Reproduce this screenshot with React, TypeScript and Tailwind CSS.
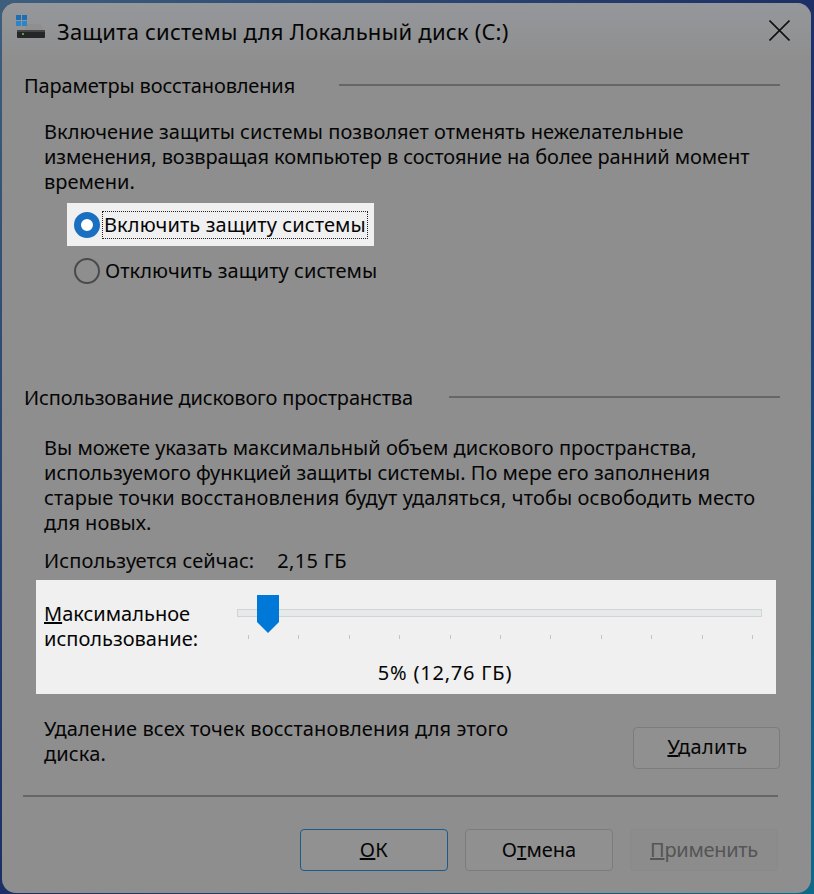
function DriveIcon() {
  return (
    <svg width="30" height="26" viewBox="0 0 30 26" className="block">
      <path d="M9 15 V9 H24 L28 15 Z" fill="#8f8f8f" />
      <rect x="1" y="15" width="28" height="8" rx="1" fill="#262626" />
      <rect x="1" y="15" width="28" height="2" fill="#454545" />
      <rect x="6" y="18" width="2" height="2" fill="#3fae4a" />
      <rect x="0" y="0" width="5" height="5" fill="#1f6fb0" />
      <rect x="6" y="0" width="5" height="5" fill="#1f6fb0" />
      <rect x="0" y="6" width="5" height="5" fill="#2b86c9" />
      <rect x="6" y="6" width="5" height="5" fill="#2b86c9" />
    </svg>
  );
}

function SectionTitle({ text, gap }: { text: string; gap: string }) {
  return (
    <div className="flex items-center pl-[22px] pr-[31px] h-[28px]">
      <span className="whitespace-nowrap tracking-[-0.15px]">{text}</span>
      <div className={'flex-1 h-[2px] bg-[#666666] ' + gap} />
    </div>
  );
}

function DlgButton({ children, className }: { children: React.ReactNode; className: string }) {
  return (
    <button className={'h-[42px] rounded-[4px] border flex items-center justify-center ' + className}>
      {children}
    </button>
  );
}

const ticks = [0, 1, 2, 3, 4, 5, 6, 7, 8, 9, 10];

export default function App() {
  return (
    <div className="w-[814px] h-[894px] bg-gradient-to-br from-[#3d5f7c] via-[#1c2f66] to-[#0e6a8a] p-[2px] overflow-hidden">
      <div className="w-[809px] h-[890px] mt-px rounded-[14px] bg-[#8e8e8e] text-[#050505] text-[20px] leading-[25px] font-['Noto_Sans','DejaVu_Sans',sans-serif] overflow-hidden">
        {/* title bar */}
        <div className="flex items-start h-[61px] pl-[14px] pr-[21px] pt-[12px] bg-gradient-to-b from-[#95979b] to-[#8e8e8e]">
          <DriveIcon />
          <span className="ml-[11px] mt-[1px] leading-[30px] text-[22px] tracking-[0.22px]">
            Защита системы для Локальный диск (C:)
          </span>
          <svg width="21" height="21" viewBox="0 0 21 21" className="ml-auto mt-[5px]">
            <path d="M0.5 0.5 L20.5 20.5 M20.5 0.5 L0.5 20.5" stroke="#111111" strokeWidth="1.6" />
          </svg>
        </div>

        <div className="mt-[7px]">
          <SectionTitle text="Параметры восстановления" gap="ml-[44px]" />
        </div>

        <p className="ml-[42px] mt-[20px] w-[730px]">
          <span className="tracking-[0.02px]">Включение защиты системы позволяет отменять нежелательные</span>
          <br />
          <span className="tracking-[-0.09px]">изменения, возвращая компьютер в состояние на более ранний момент</span>
          <br />
          времени.
        </p>

        <div className="ml-[65px] mt-[9px] w-[307px] h-[43px] bg-[#f0f0f0] flex items-center pl-[7px]">
          <span className="w-[26px] h-[26px] rounded-full border-[7px] border-[#1a6fc0] bg-white shrink-0" />
          <span className="ml-[3px] outline-1 outline-dotted outline-[#222222] leading-[26px] px-px whitespace-nowrap tracking-[0.1px]">
            Включить защиту системы
          </span>
        </div>

        <div className="ml-[72px] mt-[3px] h-[43px] flex items-center">
          <span className="w-[26px] h-[26px] rounded-full border-2 border-[#4a4a4a] shrink-0" />
          <span className="ml-[5px] whitespace-nowrap tracking-[0.05px]">Отключить защиту системы</span>
        </div>

        <div className="mt-[91px]">
          <SectionTitle text="Использование дискового пространства" gap="ml-[36px]" />
        </div>

        <p className="ml-[42px] mt-[24px] w-[730px]">
          Вы можете указать максимальный объем дискового пространства,
          <br />
          используемого функцией защиты системы. По мере его заполнения
          <br />
          <span className="tracking-[0.12px]">старые точки восстановления будут удаляться, чтобы освободить место</span>
          <br />
          для новых.
        </p>

        <div className="ml-[42px] mt-[13px] flex gap-[23px]">
          <span className="tracking-[0.1px]">Используется сейчас:</span>
          <span className="tracking-[0.3px]">2,15 ГБ</span>
        </div>

        {/* slider panel */}
        <div className="ml-[34px] mt-[7px] w-[740px] h-[114px] bg-[#f0f0f0] relative">
          <div className="flex pt-[21px] pl-[8px]">
            <div className="w-[193px]">
              <u>М</u>аксимальное
              <br />
              использование:
            </div>
            <div className="flex-1 pt-[8px] pr-[14px]">
              <div className="h-[8px] bg-[#e7eaea] border border-[#d2d4d4]" />
              <div className="flex justify-between mt-[18px] pl-[11px] pr-[9px]">
                {ticks.map((t) => (
                  <span key={t} className="w-px h-[4px] bg-[#c4c4c4]" />
                ))}
              </div>
            </div>
          </div>
          <svg width="22" height="38" viewBox="0 0 22 38" className="absolute left-[221px] top-[15px]">
            <path d="M0 0 H22 V27 L11 38 L0 27 Z" fill="#0078d7" />
          </svg>
          <div className="text-center mt-[9px] pl-[78px] tracking-[0.8px]">5% (12,76 ГБ)</div>
        </div>

        <div className="flex mt-[22px] pl-[42px] pr-[31px] justify-between items-start">
          <p className="w-[520px] tracking-[0.13px]">
            Удаление всех точек восстановления для этого
            <br />
            диска.
          </p>
          <DlgButton className="w-[147px] border-[#7c7c7c] bg-[#909090] mt-[11px] pb-[4px] pl-[2px] tracking-[0.3px]">
            <span>
              <u>У</u>далить
            </span>
          </DlgButton>
        </div>

        <div className="ml-[21px] mr-[33px] mt-[26px] h-[2px] bg-[#666666]" />

        <div className="flex justify-end gap-[17px] pr-[33px] mt-[32px]">
          <DlgButton className="w-[148px] pb-[2px] border-[#1c5a8c] bg-[#919191] tracking-[0.4px]">
            <span>
              <u>О</u>К
            </span>
          </DlgButton>
          <DlgButton className="w-[148px] pb-[2px] border-[#7c7c7c] bg-[#909090]">
            <span>
              О<u>т</u>мена
            </span>
          </DlgButton>
          <DlgButton className="w-[148px] pb-[2px] border-[#898989] bg-[#8c8c8c] text-[#555555] tracking-[-0.3px]">
            <span>
              <u>П</u>рименить
            </span>
          </DlgButton>
        </div>
      </div>
    </div>
  );
}
